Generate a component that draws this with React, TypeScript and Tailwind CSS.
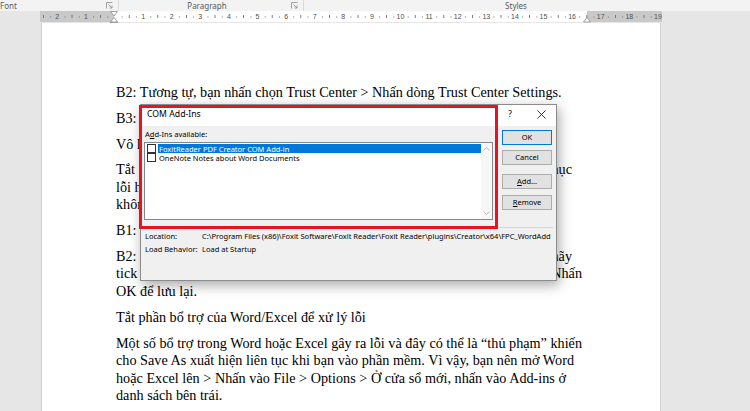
import React from 'react'

const serif = "font-['Liberation_Serif','Times_New_Roman',serif]"
const ui = "font-['Noto_Sans','Segoe_UI',sans-serif]"

/* ====== Ruler (drawing) ====== */
function Ruler() {
  const unit = 28.6
  const zero = 114.5
  const px = (v: number) => zero + v * unit
  const marks: React.ReactNode[] = []
  for (let cm = -3; cm <= 19; cm++) {
    const base = px(cm)
    if (cm !== 0 && cm >= -2) {
      marks.push(
        <text key={'n' + cm} x={base} y={8} fontSize={7} textAnchor="middle" fill="#505050" fontFamily="Liberation Sans, Arial, sans-serif">
          {Math.abs(cm)}
        </text>
      )
    }
    for (const q of [0.25, 0.5, 0.75]) {
      const xx = base + q * unit
      if (xx < 42 || xx > 660) continue
      if (q === 0.5) marks.push(<rect key={'t' + cm + q} x={xx} y={4} width={0.8} height={3} fill="#606060" />)
      else marks.push(<rect key={'d' + cm + q} x={xx} y={5.5} width={1} height={1} fill="#707070" />)
    }
  }
  return (
    <svg width={750} height={12} className="block overflow-visible">
      <rect x={40} y={0} width={74} height={11} fill="#c9c9c9" />
      <rect x={114} y={0} width={473} height={11} fill="#ffffff" />
      <rect x={587} y={0} width={75} height={11} fill="#c9c9c9" />
      {marks}
      {/* left indent hourglass */}
      <path d="M110.5 0.5h7l-3.5 4.5z" fill="#fff" stroke="#8a8a8a" strokeWidth="0.8" />
      <path d="M114 6.5l3.5 4.5h-7z" fill="#fff" stroke="#8a8a8a" strokeWidth="0.8" />
      <rect x={110.5} y={11.5} width={7} height={4} fill="#fff" stroke="#8a8a8a" strokeWidth="0.8" />
      {/* right indent */}
      <path d="M587 6.5l3.5 4.5h-7z" fill="#fff" stroke="#8a8a8a" strokeWidth="0.8" />
    </svg>
  )
}

function Launcher() {
  return (
    <svg width="7" height="7" viewBox="0 0 7 7" fill="none">
      <path d="M0.5 6.5V0.5h6" stroke="#8a8a8a" strokeWidth="0.8" />
      <path d="M2.5 2.5l3.5 3.5M6 3.5V6H3.5" stroke="#8a8a8a" strokeWidth="0.8" />
    </svg>
  )
}

function GroupLabels() {
  return (
    <div className={`flex h-[11px] items-center text-[8px] leading-[11px] text-[#5a5a5a] ${ui}`}>
      <div className="flex w-[118px] items-center justify-between pr-[5px]">
        <span>Font</span>
        <Launcher />
      </div>
      <div className="h-full w-px bg-[#dadada]" />
      <div className="relative flex w-[184px] items-center justify-center">
        <span className="-ml-[8px]">Paragraph</span>
        <span className="absolute right-[5px] top-[2px]"><Launcher /></span>
      </div>
      <div className="h-full w-px bg-[#dadada]" />
      <div className="flex w-[424px] items-center justify-center">
        <span>Styles</span>
      </div>
    </div>
  )
}

/* ====== Document text ====== */
// each line: [text, justified width or 0 for a natural (last) line]
type Line = [string, number]
const paragraphs: Line[][] = [
  [['B2: Tương tự, bạn nhấn chọn Trust Center > Nhấn dòng Trust Center Settings.', 0]],
  [['B3: Chọn Trusted Locations > Nhấn OK để lưu lại.', 0]],
  [['Vô hiệu hóa Protected View để sửa lỗi', 0]],
  [
    ['Tắt tùy chọn Protected View cũng là một cách đơn giản giúp bạn khắc phục', 456],
    ['lỗi hộp thoại Save As xuất hiện liên tục khi mở file', 0],
    ['không cần cài đặt lại phần mềm.', 0],
  ],
  [['B1: Mở File > Options > Trust Center.', 0]],
  [
    ['B2: Sau đó, nhấn chọn Protected View ở danh sách bên trái và bạn hãy', 456],
    ['tick bỏ chọn cả 3 ô trong mục Protected View ở khung bên phải > Nhấn', 466],
    ['OK để lưu lại.', 0],
  ],
  [['Tắt phần bổ trợ của Word/Excel để xử lý lỗi', 0]],
  [
    ['Một số bổ trợ trong Word hoặc Excel gây ra lỗi và đây có thể là “thủ phạm” khiến', 466],
    ['cho Save As xuất hiện liên tục khi bạn vào phần mềm. Vì vậy, bạn nên mở Word', 458],
    ['hoặc Excel lên > Nhấn vào File > Options > Ở cửa sổ mới, nhấn vào Add-ins ở', 450],
    ['danh sách bên trái.', 0],
  ],
]

/* ====== Dialog ====== */
function Btn({ children, primary }: { children: React.ReactNode; primary?: boolean }) {
  return (
    <div
      className={[
        'flex h-[15px] w-[50px] items-center justify-center bg-[#e1e1e1] text-[7.5px] leading-none text-black',
        primary ? 'border border-[#0078d7]' : 'border border-[#adadad]',
      ].join(' ')}
    >
      {children}
    </div>
  )
}

function Chevron({ up }: { up?: boolean }) {
  return (
    <svg width="7" height="4" viewBox="0 0 7 4" fill="none">
      <path d={up ? 'M0.5 3.5 3.5 0.5l3 3' : 'M0.5 0.5l3 3 3-3'} stroke="#a8a8a8" strokeWidth="0.8" />
    </svg>
  )
}

function Check() {
  return <div className="h-[9px] w-[9px] shrink-0 border border-[#333] bg-white" />
}

function ComAddIns() {
  return (
    <div className={`absolute left-[140px] top-[104px] w-[417px] border border-[#8c8c8c] bg-[#f0f0f0] shadow-[2px_4px_12px_rgba(0,0,0,0.35)] ${ui}`}>
      {/* title bar */}
      <div className="flex h-[21px] items-center bg-white pb-[2px] pl-[6px] pr-[10px] text-[8.7px] text-black">
        <span>COM Add-Ins</span>
        <span className="ml-auto mr-[25px] text-[8.5px]">?</span>
        <svg width="9" height="9" viewBox="0 0 9 9"><path d="M0.5 0.5l8 8M8.5 0.5l-8 8" stroke="#222" strokeWidth="0.9" /></svg>
      </div>

      <div className="flex flex-col px-[3px] pb-[26px] pt-[3px] text-[7.5px] leading-[10px] text-black">
        <div className="flex gap-[9px]">
          <div className="flex w-[349px] flex-col">
            <div className="mb-[3px] h-[10px] pl-[1px]">A<u>d</u>d-Ins available:</div>
            <div className="flex h-[78px] border border-[#828790] bg-white">
              <div className="flex flex-1 flex-col pl-[2px] pt-[1px]">
                <div className="flex h-[9px] items-center gap-[2px]">
                  <Check />
                  <div className="flex h-[9px] flex-1 items-center bg-[#0078d7] pl-[1px] text-white">FoxitReader PDF Creator COM Add-in</div>
                </div>
                <div className="flex h-[9px] items-center gap-[2px]">
                  <Check />
                  <div className="pl-[1px]">OneNote Notes about Word Documents</div>
                </div>
              </div>
              <div className="flex w-[11px] flex-col items-center justify-between bg-[#f7f7f7] py-[4px]">
                <Chevron up />
                <Chevron />
              </div>
            </div>
          </div>
          <div className="flex flex-col pt-[1px]">
            <Btn primary>OK</Btn>
            <div className="mt-[5px]"><Btn>Cancel</Btn></div>
            <div className="mt-[9px]"><Btn><u>A</u>dd...</Btn></div>
            <div className="mt-[6px]"><Btn><u>R</u>emove</Btn></div>
          </div>
        </div>
        <div className="mt-[7px] h-px bg-[#d5d5d5]" />
        <div className="mt-[3px] flex h-[10px] items-center pl-[1px]">
          <span className="w-[57px] shrink-0">Location:</span>
          <span className="whitespace-nowrap">C:\Program Files (x86)\Foxit Software\Foxit Reader\Foxit Reader\plugins\Creator\x64\FPC_WordAdd</span>
        </div>
        <div className="mt-[3px] flex h-[10px] items-center pl-[1px]">
          <span className="w-[57px] shrink-0">Load Behavior:</span>
          <span>Load at Startup</span>
        </div>
      </div>

      {/* red highlight box */}
      <div className="absolute left-[-2px] top-0 h-[124px] w-[359px] border-[3px] border-[#e3151f]" />
    </div>
  )
}

export default function App() {
  return (
    <div className="relative h-[411px] w-[750px] overflow-hidden bg-[#e6e6e6]">
      <div className="bg-[#f3f3f3]">
        <GroupLabels />
      </div>
      <div className="h-[12px]">
        <Ruler />
      </div>
      <div className="flex pl-[41px]">
        <div className={`h-[388px] w-[620px] border-x border-[#d0d0d0] bg-white pl-[74px] pt-[61px] text-[14.2px] leading-[17.5px] text-black ${serif}`}>
          {paragraphs.map((p, i) => (
            <div key={i} className="mb-[8.3px]">
              {p.map(([line, w], j) =>
                w ? (
                  <div key={j} className="whitespace-nowrap text-justify [text-align-last:justify]" style={{ width: w }}>
                    {line}
                  </div>
                ) : (
                  <div key={j} className="whitespace-nowrap">{line}</div>
                )
              )}
            </div>
          ))}
        </div>
      </div>
      <ComAddIns />
    </div>
  )
}
